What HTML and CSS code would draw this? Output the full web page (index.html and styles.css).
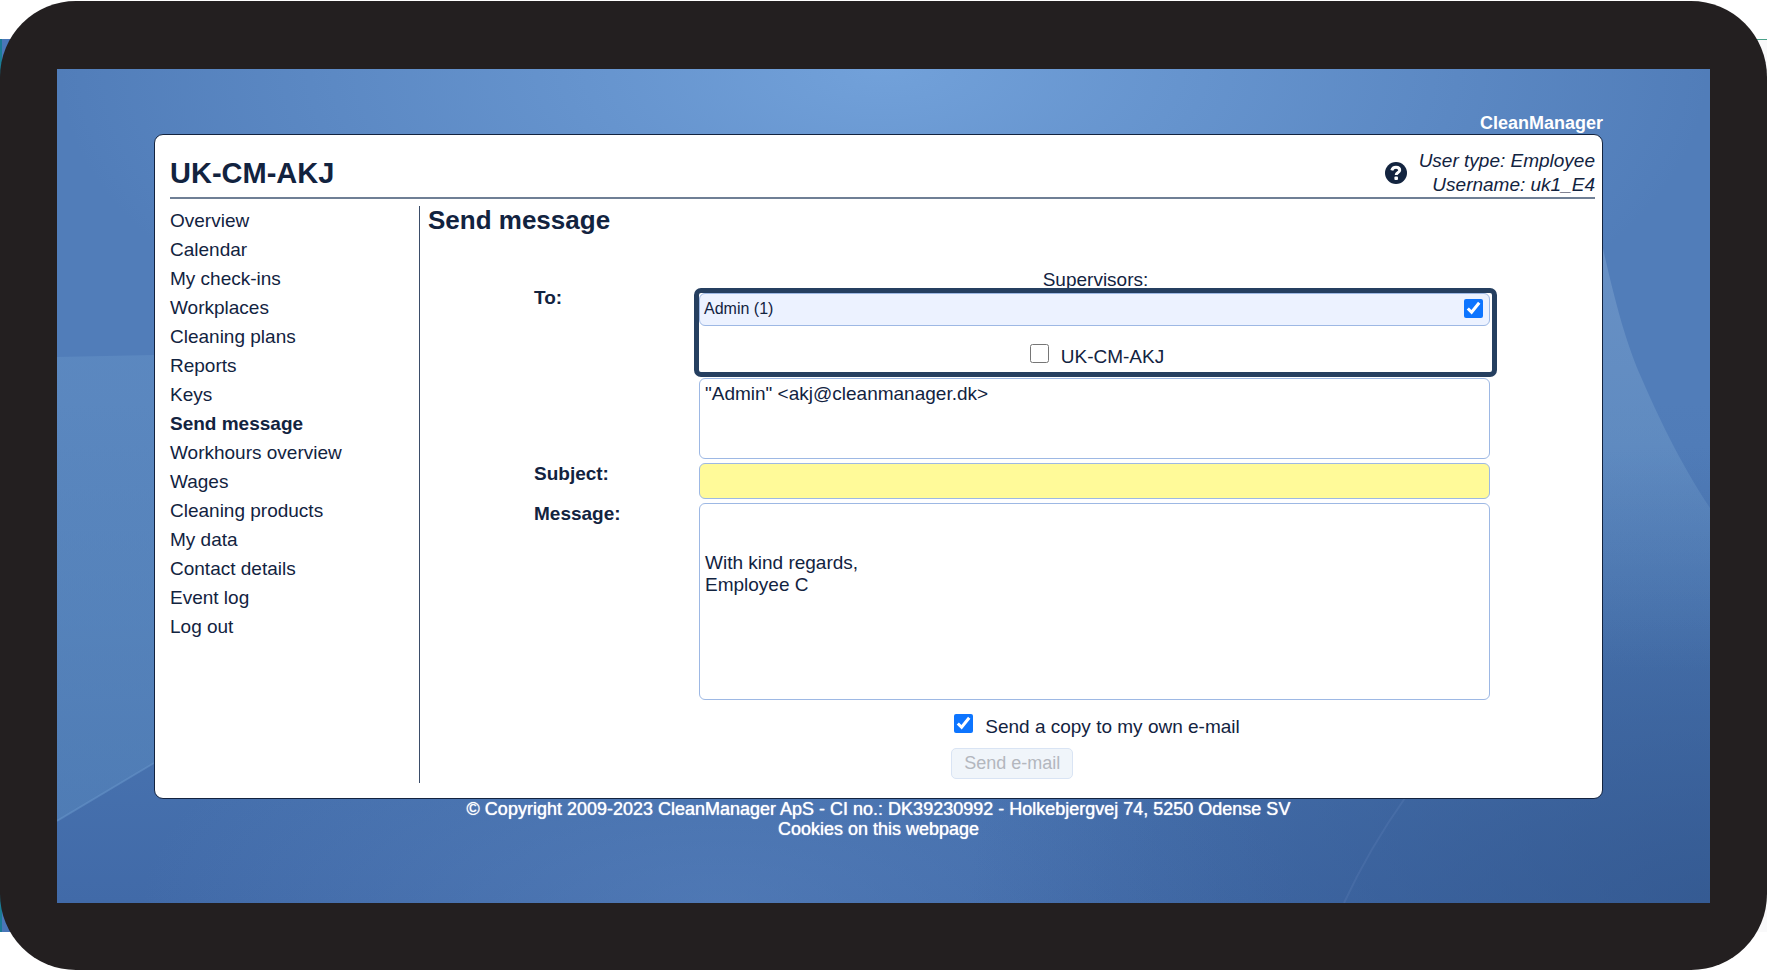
FILE: index.html
```html
<!DOCTYPE html>
<html lang="en">
<head>
  <meta charset="utf-8">
  <title>CleanManager - Send message</title>
  <link rel="stylesheet" href="styles.css">
</head>
<body>
  <div class="tablet">
    <div class="screen">
      <svg class="wallpaper" viewBox="0 0 1653 834" preserveAspectRatio="none" aria-hidden="true">
        <defs>
          <linearGradient id="leftGlow" x1="0" y1="0" x2="0" y2="1">
            <stop offset="0" stop-color="#6592c6" stop-opacity="0.5"/>
            <stop offset="1" stop-color="#5685bb" stop-opacity="0.6"/>
          </linearGradient>
          <linearGradient id="rightGlow" x1="0" y1="0" x2="0" y2="1">
            <stop offset="0" stop-color="#83a6d2" stop-opacity="0.5"/>
            <stop offset="0.5" stop-color="#76a0cc" stop-opacity="0.4"/>
            <stop offset="1" stop-color="#6c98c8" stop-opacity="0"/>
          </linearGradient>
        </defs>
        <path fill="url(#leftGlow)" d="M0 288 L97 286 L160 286 V657 L97 694 L0 752 Z"/>
        <path fill="none" stroke="#6a97cb" stroke-opacity="0.5" stroke-width="2" d="M0 752 L97 694"/>
        <path fill="url(#rightGlow)" d="M1540 150 L1547 184 C1562 250 1572 280 1584 308 C1600 345 1622 392 1653 439 V600 H1540 Z"/>
        <path fill="none" stroke="#7d9ccd" stroke-opacity="0.15" stroke-width="2" d="M1348 729 Q1312 780 1287 834"/>
      </svg>
      <div class="brand">CleanManager</div>
      <div class="panel">
        <header class="header">
          <h1>UK-CM-AKJ</h1>
          <a class="help" href="#" aria-label="Help">
            <svg viewBox="0 0 22 22" width="22" height="22">
              <circle cx="11" cy="11" r="11" fill="#13243f"/>
              <path fill="none" stroke="#fff" stroke-width="3" d="M6.8 8.4 C7.4 6 9 5.2 11 5.2 C13.4 5.2 14.7 6.5 14.7 8.2 C14.7 10.6 11.2 10.3 11.2 13"/>
              <rect x="9.4" y="14.6" width="3.6" height="3.4" rx="1" fill="#fff"/>
            </svg>
          </a>
          <div class="user">
            <div>User type: Employee</div>
            <div>Username: uk1_E4</div>
          </div>
        </header>
        <div class="content">
          <nav class="menu">
            <a href="#">Overview</a>
            <a href="#">Calendar</a>
            <a href="#">My check-ins</a>
            <a href="#">Workplaces</a>
            <a href="#">Cleaning plans</a>
            <a href="#">Reports</a>
            <a href="#">Keys</a>
            <a href="#" class="active">Send message</a>
            <a href="#">Workhours overview</a>
            <a href="#">Wages</a>
            <a href="#">Cleaning products</a>
            <a href="#">My data</a>
            <a href="#">Contact details</a>
            <a href="#">Event log</a>
            <a href="#">Log out</a>
          </nav>
          <main class="main">
            <h2>Send message</h2>
            <form class="form">
              <label class="label label-to" for="recipients">To:</label>
              <div class="cell">
                <div class="group-title">Supervisors:</div>
                <div class="highlight">
                  <div class="field group">
                    <label for="admin">Admin (1)</label>
                    <input type="checkbox" id="admin" checked>
                  </div>
                  <div class="check">
                    <input type="checkbox" id="company">
                    <label for="company">UK-CM-AKJ</label>
                  </div>
                </div>
                <textarea class="field recipients" id="recipients">"Admin" &lt;akj@cleanmanager.dk&gt;</textarea>
              </div>

              <label class="label" for="subject">Subject:</label>
              <input class="field subject" type="text" id="subject">

              <label class="label" for="message">Message:</label>
              <textarea class="field message" id="message">


With kind regards,
Employee C</textarea>

              <div class="actions">
                <div class="check">
                  <input type="checkbox" id="copy" checked>
                  <label for="copy">Send a copy to my own e-mail</label>
                </div>
                <button class="send" type="submit" disabled>Send e-mail</button>
              </div>
            </form>
          </main>
        </div>
      </div>
      <footer class="footer">
        <div>© Copyright 2009-2023 CleanManager ApS - CI no.: DK39230992 - Holkebjergvej 74, 5250 Odense SV</div>
        <a href="#">Cookies on this webpage</a>
      </footer>
    </div>
  </div>
</body>
</html>
```

FILE: styles.css
```css
:root {
  --text: #12233f;
  --line: #6f7f95;
  --field-border: #9db8e4;
  --highlight: #253f60;
  --frame: #231f20;
}
* {
  box-sizing: border-box;
}
body {
  margin: 0;
  padding: 1px 0;
  min-height: 100vh;
  display: flex;
  position: relative;
  background: #fff;
  color: var(--text);
  font-family: "Liberation Sans", Arial, sans-serif;
  font-size: 19px;
  line-height: 22px;
}
/* slivers of the page behind the tablet */
body::before,
body::after {
  content: '';
  position: absolute;
  top: 39px;
  bottom: 39px;
  width: 50%;
}
body::before {
  left: 0;
  background: #4a76b8;
  border-left: 2px solid #1b7c96;
}
body::after {
  right: 0;
  background: #f9f9fa;
  border-top: 1px solid #4aa189;
}
a {
  color: inherit;
  text-decoration: none;
}
.tablet {
  flex: 1;
  display: flex;
  position: relative;
  z-index: 1;
  padding: 68px 57px 67px;
  background: var(--frame);
  border-radius: 76px;
}
.screen {
  flex: 1;
  position: relative;
  padding: 44px 107px 40px 97px;
  background:
    radial-gradient(ellipse 50% 45% at 50% 0, rgba(122, 170, 226, 0.8), rgba(122, 170, 226, 0)),
    radial-gradient(ellipse 45% 55% at 100% 100%, rgba(48, 84, 138, 0.7), rgba(48, 84, 138, 0)),
    radial-gradient(ellipse 35% 30% at 40% 100%, rgba(98, 140, 198, 0.4), rgba(98, 140, 198, 0)),
    linear-gradient(#517db9 0%, #517db9 40%, #4c78b4 65%, #416aa8 100%);
}
.wallpaper {
  position: absolute;
  inset: 0;
  width: 100%;
  height: 100%;
}
.brand,
.panel,
.footer {
  position: relative;
}
.brand {
  color: #fff;
  font-size: 18px;
  font-weight: bold;
  line-height: 21px;
  text-align: right;
}
.panel {
  padding: 14px 7px 15px 15px;
  background: #fff;
  border: 1px solid #13233f;
  border-radius: 9px;
}
.header {
  display: flex;
  align-items: center;
  border-bottom: 2px solid var(--line);
}
.header h1 {
  flex: 1;
  margin: 0;
  font-size: 29px;
  line-height: 34px;
}
.help {
  display: flex;
  margin-right: 12px;
}
.user {
  font-style: italic;
  line-height: 24px;
  text-align: right;
}
.content {
  display: flex;
  gap: 8px;
  padding-top: 7px;
}
.menu {
  width: 250px;
  border-right: 1px solid #3b4d69;
}
.menu a {
  display: block;
  line-height: 29px;
}
.menu .active {
  font-weight: bold;
}
.main {
  flex: 1;
}
.main h2 {
  margin: 0 0 35px;
  font-size: 26px;
  line-height: 28px;
}
.form {
  display: grid;
  grid-template-columns: 165px 1fr;
  row-gap: 4px;
  align-items: start;
  padding: 0 103px 4px 106px;
}
.label {
  font-weight: bold;
}
.label-to {
  padding-top: 18px;
}
.group-title {
  margin-bottom: 2px;
  text-align: center;
}
.highlight {
  position: relative;
  margin-bottom: 6px;
  padding-bottom: 4px;
  background: #fff;
  outline: 5px solid var(--highlight);
  border-radius: 2px;
}
.field {
  display: block;
  width: calc(100% - 2px);
  margin: 0;
  padding: 4px 5px;
  background: #fff;
  border: 1px solid var(--field-border);
  border-radius: 6px;
  outline: none;
  color: inherit;
  font: inherit;
  resize: none;
}
.group {
  display: flex;
  align-items: center;
  justify-content: space-between;
  height: 33px;
  margin-bottom: 20px;
  padding: 0 6px 2px 4px;
  background: #ecf2ff;
  font-size: 16px;
}
.recipients {
  height: 81px;
}
.subject {
  height: 36px;
  background: #fffa99;
}
.message {
  height: 197px;
}
input[type="checkbox"] {
  width: 19px;
  height: 19px;
  margin: 0;
  accent-color: #0d75ff;
}
.check {
  display: flex;
  align-items: flex-end;
  justify-content: center;
  height: 22px;
}
.check input[type="checkbox"] {
  margin: 0 12px 5px 3px;
}
.actions {
  grid-column: 2;
  justify-self: center;
  padding-top: 12px;
}
.send {
  height: 31px;
  margin-top: 10px;
  padding: 0 12px;
  background: #f0f5fa;
  border: 1px solid #d9e4f4;
  border-radius: 5px;
  color: #b3b7be;
  font-family: inherit;
  font-size: 18px;
}
.footer {
  color: #fff;
  font-size: 18px;
  line-height: 20px;
  text-align: center;
  text-shadow: 0 0 1px #fff;
}
```
